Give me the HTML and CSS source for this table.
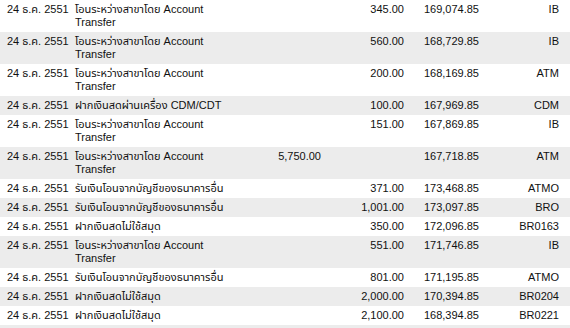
FILE: index.html
```html
<!DOCTYPE html>
<html lang="th">
<head>
<meta charset="utf-8">
<title>Statement</title>
<link rel="stylesheet" href="styles.css">
</head>
<body>
<table class="grid">
  <colgroup>
    <col class="c-date"><col class="c-desc"><col class="c-dep"><col class="c-wd"><col class="c-bal"><col class="c-src">
  </colgroup>
  <tbody>
    <tr><td class="date">24 ธ.ค. 2551</td><td class="desc"><span class="th">โอนระหว่างสาขาโดย</span> Account Transfer</td><td class="num"></td><td class="num">345.00</td><td class="num">169,074.85</td><td class="src">IB</td></tr>
    <tr class="alt"><td class="date">24 ธ.ค. 2551</td><td class="desc"><span class="th">โอนระหว่างสาขาโดย</span> Account Transfer</td><td class="num"></td><td class="num">560.00</td><td class="num">168,729.85</td><td class="src">IB</td></tr>
    <tr><td class="date">24 ธ.ค. 2551</td><td class="desc"><span class="th">โอนระหว่างสาขาโดย</span> Account Transfer</td><td class="num"></td><td class="num">200.00</td><td class="num">168,169.85</td><td class="src">ATM</td></tr>
    <tr class="alt"><td class="date">24 ธ.ค. 2551</td><td class="desc"><span class="th">ฝากเงินสดผ่านเครื่อง</span> CDM/CDT</td><td class="num"></td><td class="num">100.00</td><td class="num">167,969.85</td><td class="src">CDM</td></tr>
    <tr><td class="date">24 ธ.ค. 2551</td><td class="desc"><span class="th">โอนระหว่างสาขาโดย</span> Account Transfer</td><td class="num"></td><td class="num">151.00</td><td class="num">167,869.85</td><td class="src">IB</td></tr>
    <tr class="alt"><td class="date">24 ธ.ค. 2551</td><td class="desc"><span class="th">โอนระหว่างสาขาโดย</span> Account Transfer</td><td class="num">5,750.00</td><td class="num"></td><td class="num">167,718.85</td><td class="src">ATM</td></tr>
    <tr><td class="date">24 ธ.ค. 2551</td><td class="desc"><span class="th">รับเงินโอนจากบัญชีของธนาคารอื่น</span></td><td class="num"></td><td class="num">371.00</td><td class="num">173,468.85</td><td class="src">ATMO</td></tr>
    <tr class="alt"><td class="date">24 ธ.ค. 2551</td><td class="desc"><span class="th">รับเงินโอนจากบัญชีของธนาคารอื่น</span></td><td class="num"></td><td class="num">1,001.00</td><td class="num">173,097.85</td><td class="src">BRO</td></tr>
    <tr><td class="date">24 ธ.ค. 2551</td><td class="desc"><span class="th">ฝากเงินสดไม่ใช้สมุด</span></td><td class="num"></td><td class="num">350.00</td><td class="num">172,096.85</td><td class="src">BR0163</td></tr>
    <tr class="alt"><td class="date">24 ธ.ค. 2551</td><td class="desc"><span class="th">โอนระหว่างสาขาโดย</span> Account Transfer</td><td class="num"></td><td class="num">551.00</td><td class="num">171,746.85</td><td class="src">IB</td></tr>
    <tr><td class="date">24 ธ.ค. 2551</td><td class="desc"><span class="th">รับเงินโอนจากบัญชีของธนาคารอื่น</span></td><td class="num"></td><td class="num">801.00</td><td class="num">171,195.85</td><td class="src">ATMO</td></tr>
    <tr class="alt"><td class="date">24 ธ.ค. 2551</td><td class="desc"><span class="th">ฝากเงินสดไม่ใช้สมุด</span></td><td class="num"></td><td class="num">2,000.00</td><td class="num">170,394.85</td><td class="src">BR0204</td></tr>
    <tr><td class="date">24 ธ.ค. 2551</td><td class="desc"><span class="th">ฝากเงินสดไม่ใช้สมุด</span></td><td class="num"></td><td class="num">2,100.00</td><td class="num">168,394.85</td><td class="src">BR0221</td></tr>
    <tr class="alt"><td class="date">&nbsp;</td><td class="desc"></td><td class="num"></td><td class="num"></td><td class="num"></td><td class="src"></td></tr>
  </tbody>
</table>
</body>
</html>
```

FILE: styles.css
```css
html, body {
  margin: 0;
  padding: 0;
  background: #ffffff;
  overflow: hidden;
  height: 328px;
}

.grid {
  width: 570px;
  table-layout: fixed;
  border-collapse: collapse;
  border-spacing: 0;
  font-family: "Liberation Sans", Tahoma, "Noto Sans Thai", "Noto Sans", sans-serif;
  font-size: 11px;
  line-height: 13px;
  color: #111111;
}

.c-date { width: 72px; }
.c-desc { width: 178px; }
.c-dep { width: 75px; }
.c-wd { width: 83px; }
.c-bal { width: 75px; }
.c-src { width: 87px; }

.grid td {
  padding: 3px 4px 3px 0;
  vertical-align: top;
  white-space: normal;
  overflow: hidden;
}

.grid tr { background: #ffffff; }
.grid tr.alt { background: #ececec; }

.grid td.date {
  padding-left: 7px;
  padding-right: 0;
  white-space: nowrap;
}

.grid td.desc {
  padding-left: 3px;
  padding-right: 4px;
}

.th { white-space: nowrap; }

.grid td.num { text-align: right; }

.grid td.src {
  text-align: right;
  padding-right: 11px;
}
```
